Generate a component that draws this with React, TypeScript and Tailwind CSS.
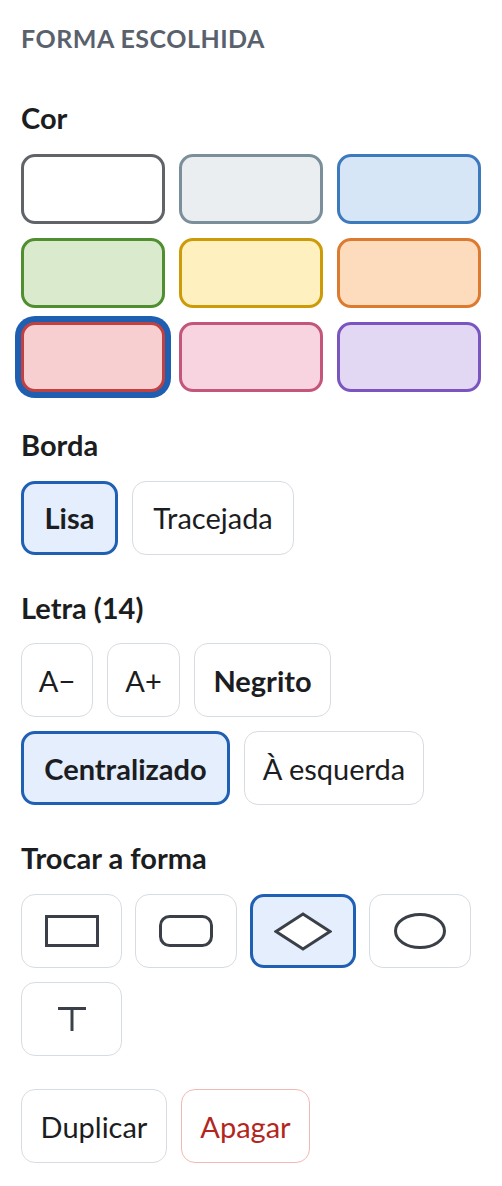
import React from "react";

const swatches = [
  { bg: "bg-[#ffffff]", border: "border-[#606368]", selected: false },
  { bg: "bg-[#eaeef1]", border: "border-[#7b8f9b]", selected: false },
  { bg: "bg-[#d6e6f6]", border: "border-[#3c7abd]", selected: false },
  { bg: "bg-[#d9ebcc]", border: "border-[#4f8f2f]", selected: false },
  { bg: "bg-[#fff0bf]", border: "border-[#cc9b07]", selected: false },
  { bg: "bg-[#fddbbd]", border: "border-[#dc7a30]", selected: false },
  { bg: "bg-[#f8cfd0]", border: "border-[#c14141]", selected: true },
  { bg: "bg-[#f8d3e0]", border: "border-[#c4567b]", selected: false },
  { bg: "bg-[#e2d8f3]", border: "border-[#7a55c0]", selected: false },
];

function Btn({
  children,
  w,
  selected = false,
  bold = false,
  danger = false,
}: {
  children: React.ReactNode;
  w: string;
  selected?: boolean;
  bold?: boolean;
  danger?: boolean;
}) {
  const base =
    "h-[74px] rounded-[14px] flex items-center justify-center text-[29px] leading-none shrink-0 ";
  const state = selected
    ? "border-[3px] border-[#1f5fb4] bg-[#e4eefc] text-[#1b1d22]"
    : danger
    ? "border-[1.5px] border-[#f2b8b4] bg-white text-[#b3261e]"
    : "border-[1.5px] border-[#d7dce2] bg-white text-[#1b1d22]";
  return (
    <div className={base + state + " " + w + (bold ? " font-bold" : " font-normal")}>
      {children}
    </div>
  );
}

function Label({ children }: { children: React.ReactNode }) {
  return (
    <div className="text-[29px] leading-[1.2] font-bold text-[#1b1d21] mb-[18px]">
      {children}
    </div>
  );
}

export default function App() {
  return (
    <div
      className="w-[502px] min-h-[1186px] bg-white px-[21px] pt-[23px]"
      style={{ fontFamily: "Lato, 'Noto Sans', sans-serif" }}
    >
      <div className="text-[25px] leading-[1.2] font-bold tracking-[0.02em] text-[#59616c] mb-[48px]">
        FORMA ESCOLHIDA
      </div>

      <div className="flex flex-col gap-[36px]">
        <section>
          <Label>Cor</Label>
          <div className="grid grid-cols-3 gap-[14px] w-[460px]">
            {swatches.map((s, i) => (
              <div
                key={i}
                className={
                  "h-[70px] rounded-[14px] border-[3px] " +
                  s.bg +
                  " " +
                  s.border +
                  (s.selected ? " shadow-[0_0_0_6px_#1f5fb2]" : "")
                }
              />
            ))}
          </div>
        </section>

        <section>
          <Label>Borda</Label>
          <div className="flex gap-[14px]">
            <Btn w="w-[97px]" selected bold>
              Lisa
            </Btn>
            <Btn w="w-[162px]">Tracejada</Btn>
          </div>
        </section>

        <section>
          <Label>Letra (14)</Label>
          <div className="flex flex-col gap-[14px]">
            <div className="flex gap-[14px]">
              <Btn w="w-[72px]">A−</Btn>
              <Btn w="w-[73px]">A+</Btn>
              <Btn w="w-[137px]" bold>
                Negrito
              </Btn>
            </div>
            <div className="flex gap-[14px]">
              <Btn w="w-[209px]" selected bold>
                Centralizado
              </Btn>
              <Btn w="w-[180px]">À esquerda</Btn>
            </div>
          </div>
        </section>

        <section>
          <Label>Trocar a forma</Label>
          <div className="flex flex-col gap-[14px]">
            <div className="flex gap-[13px]">
              <Btn w="w-[101px]">
                <svg width="54" height="32" viewBox="0 0 54 32">
                  <rect x="1.5" y="1.5" width="51" height="29" fill="white" stroke="#3b4048" strokeWidth="3" />
                </svg>
              </Btn>
              <Btn w="w-[102px]">
                <svg width="54" height="32" viewBox="0 0 54 32">
                  <rect x="1.5" y="1.5" width="51" height="29" rx="9" fill="white" stroke="#3b4048" strokeWidth="3" />
                </svg>
              </Btn>
              <Btn w="w-[106px]" selected>
                <svg width="58" height="39" viewBox="0 0 58 39">
                  <polygon
                    points="2,19.5 29,2 56,19.5 29,37"
                    fill="white"
                    stroke="#3b4048"
                    strokeWidth="3"
                    strokeLinejoin="miter"
                  />
                </svg>
              </Btn>
              <Btn w="w-[102px]">
                <svg width="52" height="36" viewBox="0 0 52 36">
                  <ellipse cx="26" cy="18" rx="24.5" ry="16.5" fill="white" stroke="#3b4048" strokeWidth="3" />
                </svg>
              </Btn>
            </div>
            <div className="flex gap-[14px]">
              <Btn w="w-[101px]">
                <svg width="28" height="24" viewBox="0 0 28 24">
                  <line x1="0" y1="1.5" x2="28" y2="1.5" stroke="#3b4048" strokeWidth="3" />
                  <line x1="14" y1="1.5" x2="14" y2="24" stroke="#3b4048" strokeWidth="3" />
                </svg>
              </Btn>
            </div>
          </div>
        </section>
      </div>

      <div className="flex gap-[14px] mt-[33px]">
        <Btn w="w-[146px]">Duplicar</Btn>
        <Btn w="w-[129px]" danger>
          Apagar
        </Btn>
      </div>
    </div>
  );
}
